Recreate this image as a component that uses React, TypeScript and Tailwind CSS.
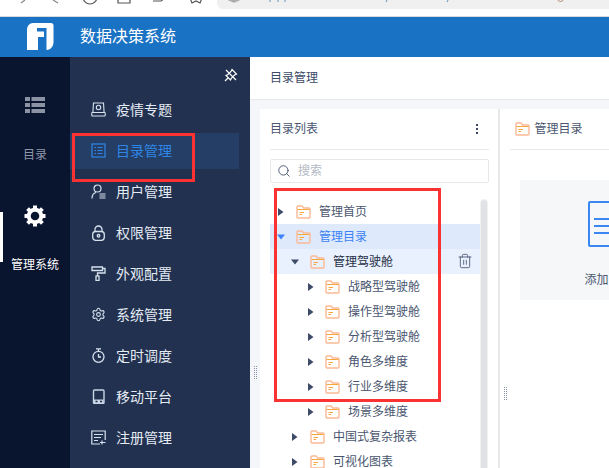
import { Search, Trash2, Settings } from 'lucide-react';
import type { ReactNode } from 'react';

const cjk = "font-['Liberation_Sans','Noto_Sans_CJK_SC',sans-serif]";

function Folder() {
  return (
    <svg width="15" height="14" viewBox="0 0 15 14" fill="none" className="shrink-0">
      <path d="M1 12V2.200C1 1.500 1.500 1 2.200 1H6l1.600 2H13c.6 0 1 .4 1 1v8c0 .6-.4 1-1 1H2c-.6 0-1-.4-1-1Z" stroke="#fbb995" strokeWidth="1.400" />
      <path d="M1.500 4.500H13.500" stroke="#f8a73f" strokeWidth="1" />
      <path d="M3.500 7.500H8M3.500 9.500H6" stroke="#f8a73f" strokeWidth="1" />
    </svg>
  );
}

function Arrow({ open, blue }: { open?: boolean; blue?: boolean }) {
  const color = blue ? '#3b82f6' : '#3d4a68';
  return (
    <svg width="8" height="8" viewBox="0 0 8 8" className="shrink-0">
      {open ? <path d="M0 1.500H8L4 6.500Z" fill={color} /> : <path d="M1 0L6.500 4L1 8Z" fill={color} />}
    </svg>
  );
}

function Gear() {
  const teeth = [0, 45, 90, 135, 180, 225, 270, 315];
  return (
    <svg width="22" height="22" viewBox="0 0 22 22" fill="none">
      <circle cx="11" cy="11" r="6.300" stroke="#fff" strokeWidth="4" />
      {teeth.map((a) => (
        <rect key={a} x="9" y="0.500" width="4" height="4" fill="#fff" transform={`rotate(${a} 11 11)`} />
      ))}
    </svg>
  );
}

const line = '#d8e2ef';

const menu: { label: string; icon: ReactNode; active?: boolean }[] = [
  {
    label: '疫情专题',
    icon: (
      <svg width="15" height="15" viewBox="0 0 15 15" fill="none" stroke={line} strokeWidth="1.100">
        <path d="M2.500 1h10l.6 9.500H1.900Z" />
        <rect x=".8" y="10.500" width="13.400" height="3.500" rx=".6" />
        <circle cx="7.500" cy="5.500" r="2.200" />
      </svg>
    ),
  },
  {
    label: '目录管理',
    active: true,
    icon: (
      <svg width="15" height="15" viewBox="0 0 15 15" fill="none" stroke="#2f86e6" strokeWidth="1.200">
        <rect x="1" y="1" width="13" height="13" />
        <path d="M3.500 4.500h1.500M6.500 4.500h5M3.500 7.500h1.500M6.500 7.500h5M3.500 10.500h1.500M6.500 10.500h5" />
      </svg>
    ),
  },
  {
    label: '用户管理',
    icon: (
      <svg width="15" height="15" viewBox="0 0 15 15" fill="none" stroke={line} strokeWidth="1.200">
        <circle cx="6.500" cy="4.500" r="3.500" />
        <path d="M1 14.500c0-3.500 2-5.500 4-6" />
        <path d="M8.500 10h6M8.500 12h6M8.500 14h6" />
      </svg>
    ),
  },
  {
    label: '权限管理',
    icon: (
      <svg width="15" height="16" viewBox="0 0 15 16" fill="none" stroke={line} strokeWidth="1.300">
        <path d="M4 7V4.500a3.500 3.500 0 0 1 7 0V7" />
        <rect x="1.700" y="6.500" width="11.600" height="8.800" rx="3" />
        <circle cx="7.500" cy="10.800" r="1.300" />
      </svg>
    ),
  },
  {
    label: '外观配置',
    icon: (
      <svg width="15" height="15" viewBox="0 0 15 15" fill="none" stroke={line} strokeWidth="1.300">
        <path d="M1 1h10.500v3.500H1Z" />
        <path d="M11.500 2.500H14V7H6.500v3" />
        <rect x="5" y="10" width="3" height="4.500" />
      </svg>
    ),
  },
  {
    label: '系统管理',
    icon: <Settings size={15} color={line} strokeWidth={1.700} />,
  },
  {
    label: '定时调度',
    icon: (
      <svg width="15" height="15" viewBox="0 0 15 15" fill="none" stroke={line} strokeWidth="1.300">
        <circle cx="7.500" cy="8.800" r="5.500" />
        <path d="M5 .8h5M7.500 1v2.500M7.500 6v3H10" />
      </svg>
    ),
  },
  {
    label: '移动平台',
    icon: (
      <svg width="15" height="15" viewBox="0 0 15 15" fill="none">
        <rect x="2.500" y="1" width="10.500" height="13.500" rx="1" stroke="#c9d6e6" strokeWidth="1.400" />
        <path d="M3 10.500h9.500v4H3Z" fill="#c9d6e6" />
        <rect x="4.500" y="11.700" width="2" height="1.600" fill="#22314f" />
        <rect x="9" y="11.700" width="2" height="1.600" fill="#22314f" />
      </svg>
    ),
  },
  {
    label: '注册管理',
    icon: (
      <svg width="15" height="15" viewBox="0 0 15 15" fill="none" stroke={line} strokeWidth="1.200">
        <path d="M9 14H.8V1h13.400v9" />
        <path d="M3 4.500h9M3 7.500h7M3 10.500h4" />
        <path d="M11 10.500v4M9 12.500h5.500" />
      </svg>
    ),
  },
];

const tree: { label: string; level: number; open?: boolean; state?: string }[] = [
  { label: '管理首页', level: 0 },
  { label: '管理目录', level: 0, open: true, state: 'selected' },
  { label: '管理驾驶舱', level: 1, open: true, state: 'hover' },
  { label: '战略型驾驶舱', level: 2 },
  { label: '操作型驾驶舱', level: 2 },
  { label: '分析型驾驶舱', level: 2 },
  { label: '角色多维度', level: 2 },
  { label: '行业多维度', level: 2 },
  { label: '场景多维度', level: 2 },
  { label: '中国式复杂报表', level: 1 },
  { label: '可视化图表', level: 1 },
];

export default function App() {
  return (
    <div className={`relative w-[609px] h-[468px] overflow-hidden bg-white flex flex-col ${cjk}`}>
      {/* browser toolbar, cut off at the top */}
      <div className="h-[17px] shrink-0 relative border-b border-[#d9d9d9] overflow-hidden">
        <div className="absolute left-[217px] right-0 -top-4 h-[25px] bg-[#f0f0f0] rounded-l-md" />
        <svg width="609" height="10" viewBox="0 0 609 10" fill="none" stroke="#555" strokeWidth="1.200" className="absolute left-0 top-0">
          <path d="M25 0l-4 3M53 0l5 3" stroke="#888" />
          <circle cx="90" cy="-3" r="7" />
          <path d="M118 -2v5h12v-5" />
          <path d="M153 1h8c1 0 2-2 2-3" />
          <path d="M190 -2l2 5 4-2 4 2 2-5" />
          <path d="M229 -2l5 3 5-3v2l-5 2-5-2Z" stroke="#aaa" />
          <path d="M270 0v2M278 0v2M285 0v2M387 0l-1 2M448 0l-1 2" stroke="#7aa3c9" />
          <path d="M558 0c1 2 4 2 5 0" stroke="#b98" />
        </svg>
      </div>

      {/* top bar */}
      <div className="h-10 shrink-0 bg-[#1a72c4] flex items-center">
        <svg width="28" height="28" viewBox="0 0 28 28" className="ml-[26px]">
          <path
            d="M7 0H25c1.500 0 2.500 1 2.500 2.500V19c0 4-2.500 8-7 8V5H11v3.500h7V14h-6v13H1V7C1 3 3.500 0 7 0Z"
            fill="#fff"
          />
        </svg>
        <span className="ml-[26px] text-[16px] text-white">数据决策系统</span>
      </div>

      <div className="flex-1 flex min-h-0">
        {/* icon rail */}
        <div className="w-[70px] shrink-0 bg-[#09142f] flex flex-col items-center relative">
          <svg width="20" height="16" viewBox="0 0 20 16" fill="#8b92a3" className="mt-10">
            <rect x="0" y="0" width="5" height="4" />
            <rect x="6.500" y="0" width="13.500" height="4" />
            <rect x="0" y="6" width="5" height="4" />
            <rect x="6.500" y="6" width="13.500" height="4" />
            <rect x="0" y="12" width="5" height="4" />
            <rect x="6.500" y="12" width="13.500" height="4" />
          </svg>
          <span className="mt-[33px] text-[12px] leading-[18px] text-[#8f97a8]">目录</span>
          <div className="mt-[41px] h-[22px]"><Gear /></div>
          <span className="mt-[29px] text-[12px] leading-[18px] text-white">管理系统</span>
          <div className="absolute left-0 top-[155px] w-[3px] h-[50px] bg-white" />
        </div>

        {/* menu */}
        <div className="w-[180px] shrink-0 bg-[#22314f] relative pt-[32px]">
          <svg width="14" height="14" viewBox="0 0 14 14" fill="none" stroke="#fff" strokeWidth="1.200" className="absolute right-[12px] top-[11px]">
            <path d="M8 1.500l4.500 4.500-2 1-3 3-1 2L2 7.500l2-1 3-3Z" />
            <path d="M1 13l3-3M2 2l10 10" />
          </svg>
          {menu.map((m) => (
            <div key={m.label} className="h-[41px] flex items-center">
              <div className={`w-[169px] h-9 flex items-center pl-[21px] ${m.active ? 'bg-[#243e65]' : ''}`}>
                <span className="w-[15px] h-[15px] flex">{m.icon}</span>
                <span className={`ml-[10px] pt-[2px] text-[14px] ${m.active ? 'text-[#2f86e6]' : 'text-[#e4ebf4]'}`}>{m.label}</span>
              </div>
            </div>
          ))}
        </div>

        {/* content */}
        <div className="flex-1 flex flex-col min-w-0 bg-[#f5f6f9]">
          <div className="h-[43px] shrink-0 bg-white border-b border-[#e8e8e8] flex items-center pl-[20px] text-[12px] text-[#3d4a68]">
            目录管理
          </div>
          <div className="flex-1 flex pl-[10px] pt-[9px] min-h-0">
            {/* tree panel */}
            <div className="w-[239.500px] shrink-0 bg-white border-r-2 border-[#e8e8e8] pl-[10px] pr-[9px] flex flex-col min-h-0">
              <div className="h-[41px] shrink-0 border-b border-[#e8e8e8] flex items-center justify-between pr-[11px] text-[12px] text-[#4a5670]">
                <span>目录列表</span>
                <span className="flex flex-col gap-[2px]">
                  <i className="w-[2px] h-[2px] bg-[#3d4a68]" />
                  <i className="w-[2px] h-[2px] bg-[#3d4a68]" />
                  <i className="w-[2px] h-[2px] bg-[#3d4a68]" />
                </span>
              </div>
              <div className="mt-[9px] h-6 shrink-0 border border-[#e5e7eb] rounded-[2px] flex items-center pl-[6px]">
                <Search size={14} color="#3d4a68" strokeWidth={1.500} />
                <span className="ml-[7px] text-[12px] text-[#b4b9c4]">搜索</span>
              </div>
              <div className="mt-[14px] flex flex-1 min-h-0">
                <div className="w-[210px] shrink-0 pt-[2px]">
                  {tree.map((t) => (
                    <div
                      key={t.label}
                      className={`h-[25px] flex items-center relative ${
                        t.state === 'selected' ? 'bg-[#deeafb]' : t.state === 'hover' ? 'bg-[#e8f1fd]' : ''
                      } ${t.level === 0 ? 'pl-[7px]' : t.level === 1 ? 'pl-[21px]' : 'pl-[37px]'}`}
                    >
                      <Arrow open={t.open} blue={t.state === 'selected'} />
                      <span className={t.level === 1 ? 'ml-[11px]' : t.level === 0 ? 'ml-[11px]' : 'ml-[10px]'}><Folder /></span>
                      <span className={`ml-[8px] text-[12px] ${t.state === 'selected' ? 'text-[#3b82f6]' : t.state === 'hover' ? 'text-[#262f45]' : 'text-[#4a5670]'}`}>
                        {t.label}
                      </span>
                      {t.state === 'hover' && (
                        <Trash2 size={16} color="#3d4a68" strokeWidth={1.200} className="absolute right-[7px] top-[4px]" />
                      )}
                    </div>
                  ))}
                </div>
                <div className="w-[6px] ml-[1px] mt-[3px] h-[280px] rounded-t-full bg-[#e1e2e5] ring-1 ring-[#f1f1f2]" />
              </div>
            </div>
            {/* detail panel */}
            <div className="flex-1 bg-white pl-[10px] min-w-0 overflow-hidden">
              <div className="h-[41px] border-b border-[#e8e8e8] flex items-center pl-[5px] text-[12px] text-[#4a5670] whitespace-nowrap">
                <Folder />
                <span className="ml-[5px]">管理目录</span>
              </div>
              <div className="mt-[30px] ml-[10px] h-[120px] bg-[#f6f7f9] pl-[68px] pt-[21px] whitespace-nowrap">
                <div className="w-[60px] h-[46px] border-2 border-[#3b86f0] rounded-[2px] flex flex-col gap-[5px] pt-[15px] pl-[4px]">
                  <i className="h-[2px] bg-[#3b86f0]" />
                  <i className="h-[2px] bg-[#3b86f0]" />
                  <i className="h-[2px] bg-[#3b86f0]" />
                </div>
                <div className="mt-[24px] -ml-[3px] text-[12px] text-[#4a5670]">添加</div>
              </div>
            </div>
          </div>
        </div>
      </div>

      {/* drag handles */}
      <div className="absolute left-[254px] top-[366px] w-[3px] h-[13px] border-x border-dotted border-[#8a93a6]" />
      <div className="absolute left-[504px] top-[387px] w-[3px] h-[13px] border-x border-dotted border-[#8a93a6]" />

      {/* red annotation boxes */}
      <div className="absolute left-[72px] top-[133px] w-[123px] h-[49px] border-[3px] border-[#fb3232]" />
      <div className="absolute left-[274px] top-[188px] w-[167px] h-[214px] border-[3px] border-[#fb3232]" />
    </div>
  );
}
